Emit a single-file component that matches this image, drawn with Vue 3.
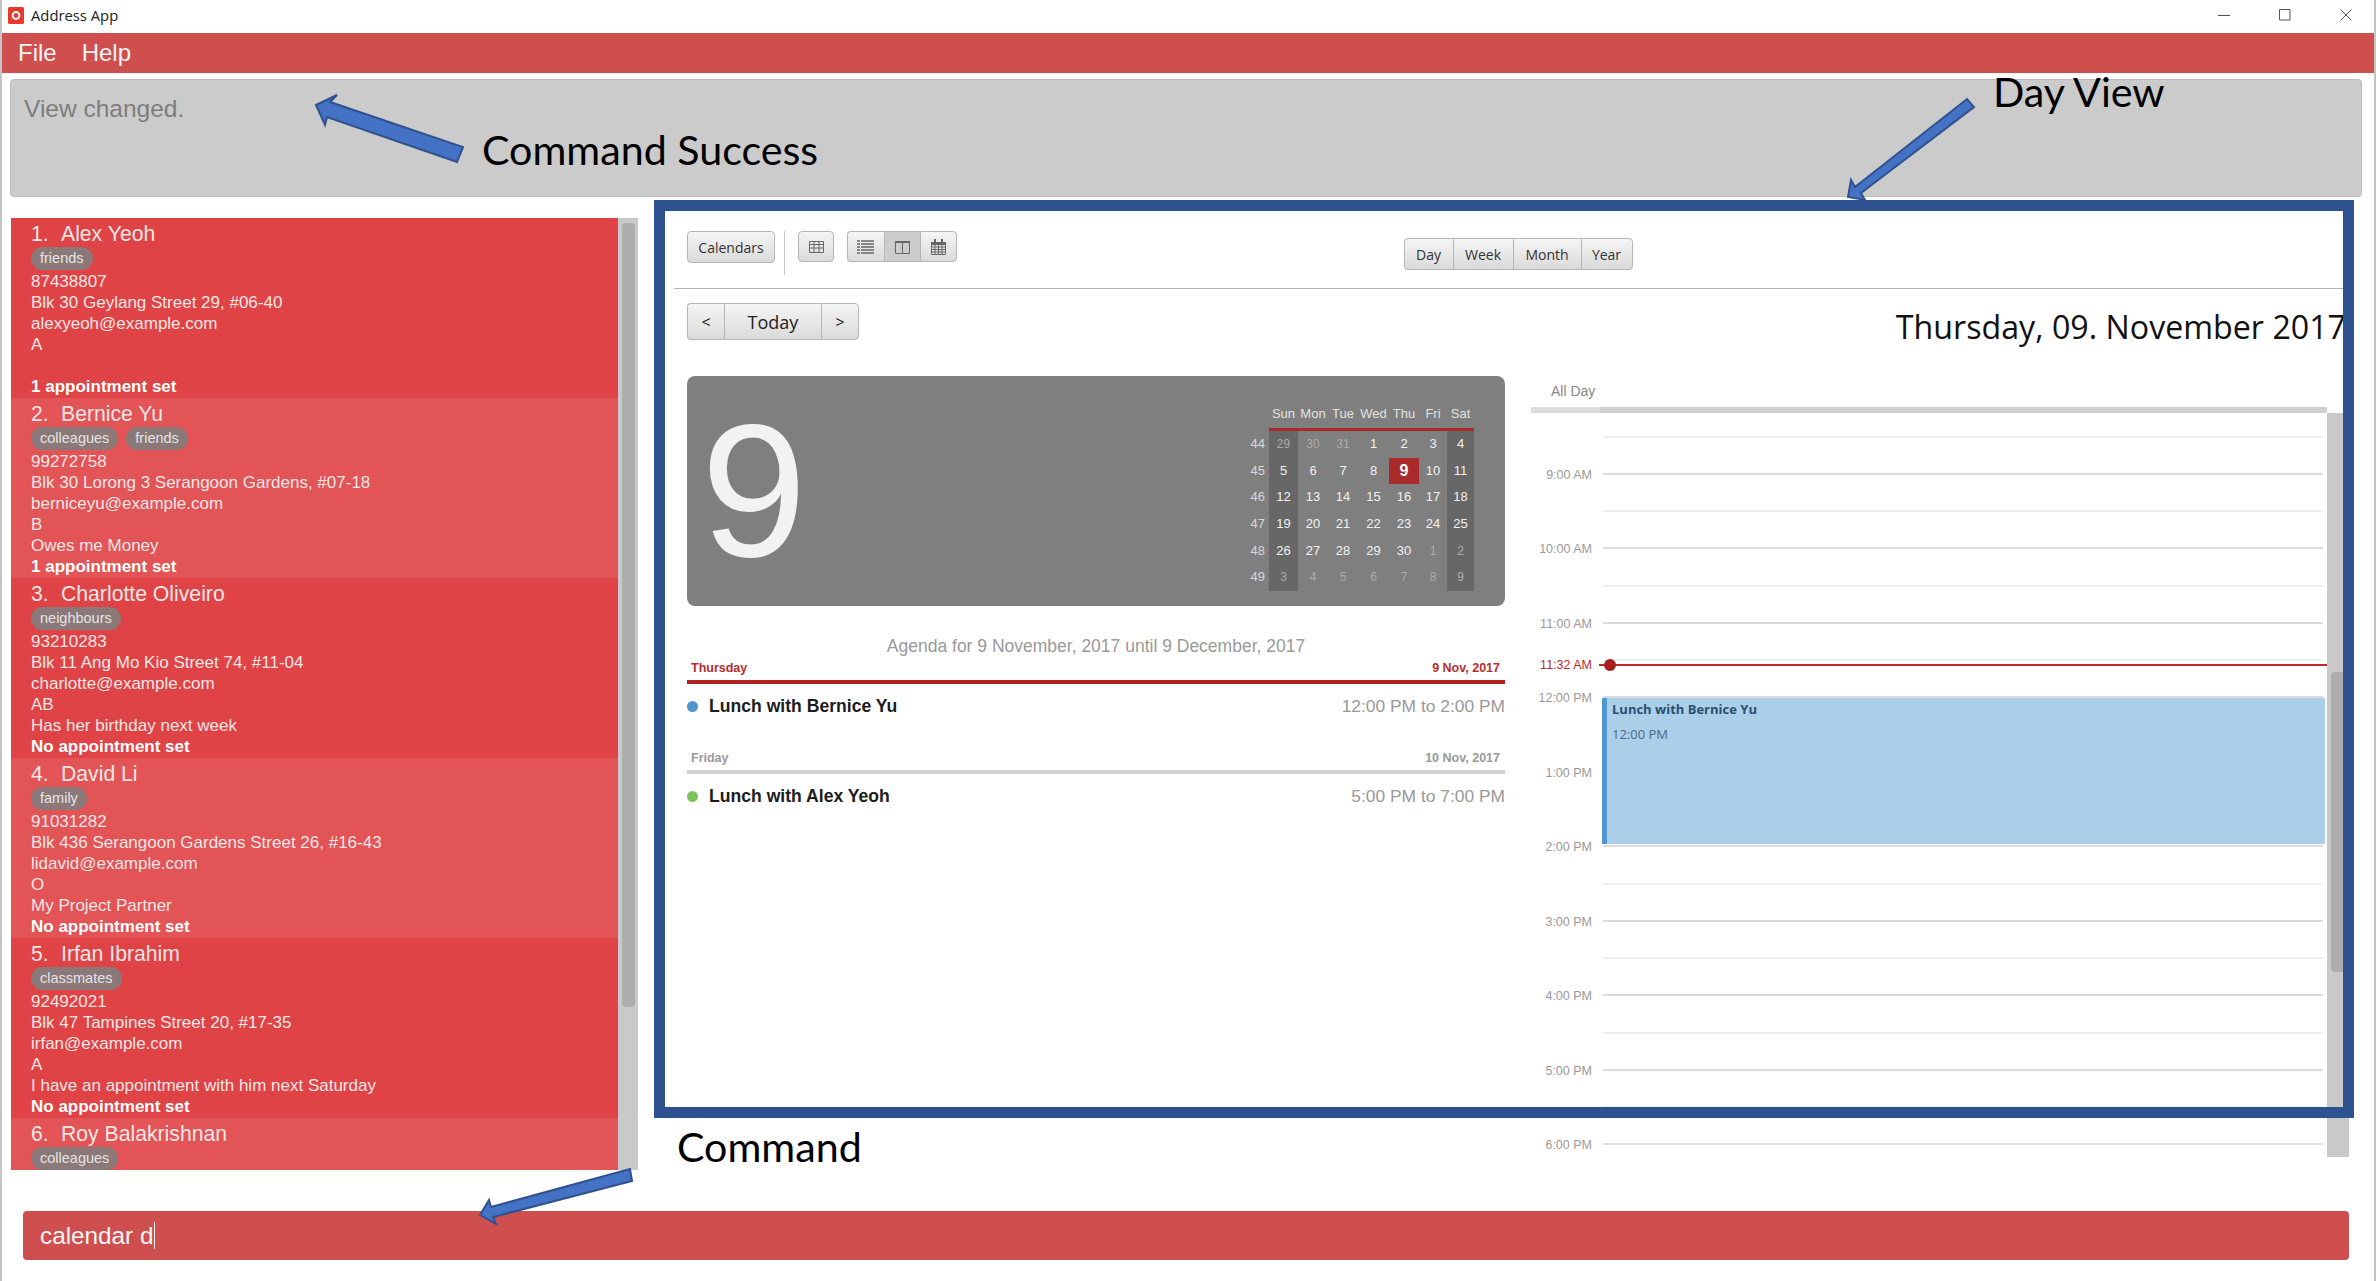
<script setup>
const persons = [
  { name: 'Alex Yeoh', tags: ['friends'], phone: '87438807', address: 'Blk 30 Geylang Street 29, #06-40', email: 'alexyeoh@example.com', group: 'A', remark: '', appt: '1 appointment set' },
  { name: 'Bernice Yu', tags: ['colleagues', 'friends'], phone: '99272758', address: 'Blk 30 Lorong 3 Serangoon Gardens, #07-18', email: 'berniceyu@example.com', group: 'B', remark: 'Owes me Money', appt: '1 appointment set' },
  { name: 'Charlotte Oliveiro', tags: ['neighbours'], phone: '93210283', address: 'Blk 11 Ang Mo Kio Street 74, #11-04', email: 'charlotte@example.com', group: 'AB', remark: 'Has her birthday next week', appt: 'No appointment set' },
  { name: 'David Li', tags: ['family'], phone: '91031282', address: 'Blk 436 Serangoon Gardens Street 26, #16-43', email: 'lidavid@example.com', group: 'O', remark: 'My Project Partner', appt: 'No appointment set' },
  { name: 'Irfan Ibrahim', tags: ['classmates'], phone: '92492021', address: 'Blk 47 Tampines Street 20, #17-35', email: 'irfan@example.com', group: 'A', remark: 'I have an appointment with him next Saturday', appt: 'No appointment set' },
  // the list is scrolled so only the top of this card shows
  { name: 'Roy Balakrishnan', tags: ['colleagues'] },
]

const weekdays = ['Sun', 'Mon', 'Tue', 'Wed', 'Thu', 'Fri', 'Sat']
const weeks = [
  { no: 44, days: [[29, 1], [30, 1], [31, 1], [1], [2], [3], [4]] },
  { no: 45, days: [[5], [6], [7], [8], [9], [10], [11]] },
  { no: 46, days: [[12], [13], [14], [15], [16], [17], [18]] },
  { no: 47, days: [[19], [20], [21], [22], [23], [24], [25]] },
  { no: 48, days: [[26], [27], [28], [29], [30], [1, 1], [2, 1]] },
  { no: 49, days: [[3, 1], [4, 1], [5, 1], [6, 1], [7, 1], [8, 1], [9, 1]] },
]

// one slot every half hour, only the full hours carry a label
const slots = ['', '9:00 AM', '', '10:00 AM', '', '11:00 AM', '', '12:00 PM', '', '1:00 PM', '', '2:00 PM', '', '3:00 PM', '', '4:00 PM', '', '5:00 PM', '', '6:00 PM', '']
</script>

<template>
  <div class="window">
    <div class="title-bar">
      <svg class="app-icon" width="16" height="17" viewBox="0 0 16 17">
        <rect width="16" height="17" rx="1.5" fill="#e8392c" />
        <circle cx="8" cy="8.5" r="3.4" fill="none" stroke="#fff" stroke-width="2" />
      </svg>
      <span class="app-name">Address App</span>
      <div class="win-controls">
        <svg width="12" height="12" viewBox="0 0 12 12"><path d="M0 6.5h12" stroke="#555" fill="none" /></svg>
        <svg width="12" height="12" viewBox="0 0 12 12"><path d="M.5.5h10.5v10.5h-10.5z" stroke="#555" fill="none" /></svg>
        <svg width="12" height="12" viewBox="0 0 12 12"><path d="M.5.5l11 11M11.5.5l-11 11" stroke="#555" fill="none" /></svg>
      </div>
    </div>

    <div class="menu-bar">
      <span>File</span>
      <span>Help</span>
    </div>

    <div class="result-box">View changed.</div>

    <div class="main">
      <div class="person-panel">
        <div class="person-list">
          <div v-for="(p, i) in persons" :key="p.name" class="person" :class="{ even: i % 2 === 1 }">
            <div class="person-name"><span class="person-no">{{ i + 1 }}.</span>{{ p.name }}</div>
            <div class="tags">
              <span v-for="t in p.tags" :key="t" class="tag">{{ t }}</span>
            </div>
            <template v-if="p.appt">
              <div class="line">{{ p.phone }}</div>
              <div class="line">{{ p.address }}</div>
              <div class="line">{{ p.email }}</div>
              <div class="line">{{ p.group }}</div>
              <div class="line">{{ p.remark }}</div>
              <div class="line appt">{{ p.appt }}</div>
            </template>
          </div>
        </div>
        <div class="list-scroll"><div class="list-thumb"></div></div>
      </div>

      <div class="calendar">
        <div class="toolbar">
          <button class="btn calendars-btn">Calendars</button>
          <div class="tool-sep"></div>
          <button class="btn icon-btn">
            <svg width="17" height="14" viewBox="0 0 17 14"><path d="M1.5 1.5h14v11h-14zM1.5 4.5h14M1.5 8h14M6 1.5v11M11 1.5v11" fill="none" stroke="#666" /></svg>
          </button>
          <div class="btn-group view-switch">
            <button class="btn icon-btn">
              <svg width="17" height="15" viewBox="0 0 17 15"><path d="M0 2h3M0 5h3M0 8h3M0 11h3M0 14h3M4 2h13M4 5h13M4 8h13M4 11h13M4 14h13" fill="none" stroke="#666" stroke-width="1.6" /></svg>
            </button>
            <button class="btn icon-btn active">
              <svg width="15" height="14" viewBox="0 0 15 14"><path d="M.5 1.5h14v12h-14zM7.5 1.5v12" fill="none" stroke="#666" /><path d="M0 1h15v2H0z" fill="#666" /></svg>
            </button>
            <button class="btn icon-btn">
              <svg width="15" height="16" viewBox="0 0 15 16"><path d="M.5 3.5h14v12H.5zM.5 8h14M.5 10.5h14M.5 13h14M4 6v9M7.5 6v9M11 6v9" fill="none" stroke="#666" /><path d="M0 3h15v3H0zM3 0h2v4H3zM10 0h2v4h-2z" fill="#666" /></svg>
            </button>
          </div>
          <div class="btn-group range-switch">
            <button class="btn day-btn">Day</button>
            <button class="btn week-btn">Week</button>
            <button class="btn month-btn">Month</button>
            <button class="btn year-btn">Year</button>
          </div>
        </div>

        <div class="nav-row">
          <div class="btn-group nav-group">
            <button class="btn nav-arrow">&lt;</button>
            <button class="btn today-btn">Today</button>
            <button class="btn nav-arrow">&gt;</button>
          </div>
          <div class="date-title">Thursday, 09. November 2017</div>
        </div>

        <div class="cal-body">
          <div class="agenda-col">
            <div class="date-panel">
              <div class="big-day">9</div>
              <div class="mini-cal">
                <div></div>
                <div v-for="d in weekdays" :key="d" class="mini-head">{{ d }}</div>
                <template v-for="w in weeks" :key="w.no">
                  <div class="mini-week">{{ w.no }}</div>
                  <div
                    v-for="(d, j) in w.days"
                    :key="j"
                    class="mini-day"
                    :class="{ weekend: j === 0 || j === 6, muted: d[1], today: w.no === 45 && d[0] === 9 }"
                  >{{ d[0] }}</div>
                </template>
              </div>
            </div>

            <div class="agenda-title">Agenda for 9 November, 2017 until 9 December, 2017</div>

            <div class="agenda-head current">
              <span>Thursday</span>
              <span>9 Nov, 2017</span>
            </div>
            <div class="agenda-row">
              <span class="dot blue"></span>
              <span class="agenda-name">Lunch with Bernice Yu</span>
              <span class="agenda-time">12:00 PM to 2:00 PM</span>
            </div>

            <div class="agenda-head next">
              <span>Friday</span>
              <span>10 Nov, 2017</span>
            </div>
            <div class="agenda-row">
              <span class="dot green"></span>
              <span class="agenda-name">Lunch with Alex Yeoh</span>
              <span class="agenda-time">5:00 PM to 7:00 PM</span>
            </div>
          </div>

          <div class="day-col">
            <div class="all-day">All Day</div>
            <div class="all-day-bar"><div class="all-day-gutter"></div></div>
            <div class="day-scroll">
              <div class="day-grid">
                <div v-for="(s, i) in slots" :key="i" class="slot">
                  <div class="slot-label">{{ s }}</div>
                  <div class="slot-line" :class="{ hour: s }"></div>
                </div>
                <div class="now-label">11:32 AM</div>
                <div class="now-line"><div class="now-dot"></div></div>
                <div class="event">
                  <div class="event-name">Lunch with Bernice Yu</div>
                  <div class="event-time">12:00 PM</div>
                </div>
              </div>
              <div class="day-track"><div class="day-thumb"></div></div>
            </div>
          </div>
        </div>
      </div>
    </div>

    <div class="command-box">calendar d<span class="caret"></span></div>

    <!-- annotations drawn on top of the screenshot -->
    <div class="frame"></div>
    <svg class="arrows" width="2376" height="1281" viewBox="0 0 2376 1281">
      <polygon points="316,105 337,95 330,102 463,147 457,162 327,117 325,125" />
      <polygon points="1848,197 1851,180 1855,187 1967,99 1974,107 1861,193 1865,200" />
      <polygon points="480,1215 489,1200 491,1207 630,1169 632,1181 493,1217 496,1224" />
    </svg>
    <div class="note note-success">Command Success</div>
    <div class="note note-day">Day View</div>
    <div class="note note-command">Command</div>
  </div>
</template>

<style>
html, body {
  margin: 0;
  background: #fff;
}
</style>

<style scoped>
.window {
  position: relative;
  width: 2376px;
  height: 1281px;
  overflow: hidden;
  box-sizing: border-box;
  border-left: 2px solid #c4c4c4;
  border-right: 2px solid #c4c4c4;
  background: #fff;
  display: flex;
  flex-direction: column;
  font-family: "Liberation Sans", sans-serif;
}

.title-bar {
  height: 33px;
  display: flex;
  align-items: center;
  padding-left: 6px;
  padding-bottom: 3px;
  box-sizing: border-box;
}

.app-name {
  margin-left: 7px;
  font-family: "Open Sans", sans-serif;
  font-size: 14.8px;
  color: #222;
}

.win-controls {
  margin-left: auto;
  display: flex;
  gap: 49px;
  padding-right: 22px;
}

.menu-bar {
  height: 40px;
  background: #cf4f4f;
  display: flex;
  align-items: center;
  gap: 25px;
  padding-left: 16px;
  color: #f4f4f4;
  font-size: 24px;
}

.result-box {
  height: 118px;
  box-sizing: border-box;
  margin: 6px 12px 0 8px;
  padding: 14px 13px;
  background: #cbcbcb;
  border: 1px solid #bdbdbd;
  border-radius: 4px;
  color: #7d7d7d;
  font-size: 24.5px;
  line-height: 30px;
}

.main {
  height: 1014px;
  display: flex;
  align-items: flex-start;
}

.person-panel {
  margin: 21px 0 0 9px;
  width: 627px;
  height: 952px;
  display: flex;
}

.person-list {
  flex: 1;
  overflow: hidden;
}

.person {
  height: 180px;
  box-sizing: border-box;
  padding: 3px 0 0 20px;
  background: #e04345;
  color: #f5e6e6;
  font-size: 17px;
}

.person.even {
  background: #e25456;
}

.person-name {
  height: 26px;
  line-height: 26px;
  font-size: 21.2px;
}

.person-no {
  display: inline-block;
  width: 30px;
}

.tags {
  display: flex;
  gap: 8px;
  height: 23px;
  margin-bottom: 1px;
}

.tag {
  padding: 0 9px;
  line-height: 23px;
  border-radius: 12px;
  background: #8b7878;
  color: #e4e4e4;
  font-size: 14.5px;
}

.line {
  height: 21px;
  line-height: 21px;
}

.appt {
  font-weight: 700;
  color: #fff;
}

.list-scroll {
  width: 20px;
  background: #c9c9c9;
  box-sizing: border-box;
  padding: 5px 3px 0 4px;
}

.list-thumb {
  height: 784px;
  border-radius: 4px;
  background: #adadad;
}

.calendar {
  margin: 34px 0 0 36px;
  width: 1675px;
}

.toolbar {
  height: 58px;
  box-sizing: border-box;
  padding-left: 13px;
  border-bottom: 1.5px solid #b4b4b4;
  display: flex;
  align-items: flex-start;
}

.btn {
  margin: 0;
  padding: 0;
  box-sizing: border-box;
  border: 1px solid #b5b5b5;
  border-radius: 4px;
  background: linear-gradient(#f5f5f5, #dadada);
  font-family: "Open Sans", sans-serif;
  font-size: 14px;
  color: #333;
  display: flex;
  align-items: center;
  justify-content: center;
}

.calendars-btn {
  width: 88px;
  height: 32px;
}

.tool-sep {
  width: 1px;
  height: 44px;
  margin: 0 13px 0 9px;
  background: #c4c4c4;
}

.icon-btn {
  width: 36px;
  height: 31px;
}

.btn-group {
  display: flex;
}

.btn-group .btn {
  border-radius: 0;
  border-right-width: 0;
}

.btn-group .btn:first-child {
  border-radius: 4px 0 0 4px;
}

.btn-group .btn:last-child {
  border-radius: 0 4px 4px 0;
  border-right-width: 1px;
}

.view-switch {
  margin-left: 13px;
}

.view-switch .icon-btn {
  width: 36.5px;
}

.btn.active {
  background: #cdcdcd;
}

.range-switch {
  margin: 7px 0 0 447px;
}

.range-switch .btn {
  height: 32px;
}

.day-btn { width: 49px; }
.week-btn { width: 60px; }
.month-btn { width: 68px; }
.year-btn { width: 52px; }

.nav-row {
  margin-top: 14px;
  padding: 0 3px 0 13px;
  height: 37px;
  display: flex;
  justify-content: space-between;
  align-items: center;
}

.nav-arrow {
  width: 37px;
  height: 37px;
  font-size: 16px;
  color: #222;
}

.nav-arrow:last-child {
  width: 38px;
}

.today-btn {
  width: 97px;
  height: 37px;
  font-size: 18px;
  color: #222;
}

.date-title {
  margin-top: 10px;
  font-family: "Open Sans", sans-serif;
  font-size: 32.2px;
  color: #111;
  white-space: nowrap;
}

.cal-body {
  margin-top: 36px;
  display: flex;
  align-items: flex-start;
}

.agenda-col {
  margin-left: 13px;
  width: 818px;
}

.date-panel {
  height: 230px;
  box-sizing: border-box;
  padding: 25px 31px 0 0;
  border-radius: 8px;
  background: #7f7f7f;
  display: flex;
  justify-content: space-between;
  overflow: hidden;
}

.big-day {
  margin: 0 0 0 14px;
  font-family: "Liberation Sans", sans-serif;
  font-size: 190px;
  line-height: 178px;
  color: #f2f2f2;
}

.mini-cal {
  display: grid;
  grid-template-columns: 30px 29px 30px 30px 31px 30px 28px 27px;
  grid-template-rows: 30px repeat(6, 26.7px);
  font-size: 13px;
  color: #f2f2f2;
}

.mini-head {
  height: 30px;
  box-sizing: border-box;
  border-bottom: 3px solid #a82a2a;
  color: #e2e2e2;
  text-align: center;
  line-height: 26px;
}

.mini-week {
  padding-right: 4px;
  text-align: right;
  color: #d8d8d8;
  line-height: 26.7px;
}

.mini-day {
  text-align: center;
  line-height: 26.7px;
}

.mini-day.weekend {
  background: #676767;
}

.mini-day.muted {
  color: #adadad;
  font-size: 12px;
}

.mini-day.today {
  background: #a82a2a;
  color: #fff;
  font-weight: 700;
  font-size: 16px;
}

.agenda-title {
  margin-top: 29px;
  height: 22px;
  line-height: 22px;
  text-align: center;
  font-size: 17.5px;
  color: #999;
}

.agenda-head {
  height: 27px;
  box-sizing: border-box;
  padding: 0 5px 0 4px;
  display: flex;
  justify-content: space-between;
  font-size: 12.5px;
  font-weight: 700;
  line-height: 22px;
}

.agenda-head.current {
  border-bottom: 4px solid #b22222;
  color: #b92c2c;
}

.agenda-head.next {
  margin-top: 19px;
  border-bottom: 4px solid #d2d2d2;
  color: #999;
}

.agenda-row {
  height: 44px;
  display: flex;
  align-items: center;
}

.dot {
  width: 11px;
  height: 11px;
  border-radius: 50%;
  margin-right: 11px;
}

.dot.blue { background: #4f96d1; }
.dot.green { background: #7cc35b; }

.agenda-name {
  font-size: 17.6px;
  font-weight: 700;
  color: #1c1c1c;
}

.agenda-time {
  margin-left: auto;
  font-size: 17.4px;
  color: #999;
}

.day-col {
  margin-left: 26px;
  width: 818px;
}

.all-day {
  height: 31px;
  box-sizing: border-box;
  padding-left: 20px;
  font-size: 14px;
  line-height: 30px;
  color: #888;
}

.all-day-bar {
  width: 796px;
  height: 6px;
  background: #cfcfcf;
}

.all-day-gutter {
  width: 69px;
  height: 6px;
  background: #dcdcdc;
}

.day-scroll {
  height: 744px;
  display: flex;
}

.day-grid {
  position: relative;
  width: 796px;
  height: 744px;
  overflow: hidden;
  box-sizing: border-box;
  padding-top: 5px;
}

.slot {
  height: 37.25px;
  display: flex;
  align-items: center;
}

.slot-label {
  width: 61px;
  flex: none;
  margin-right: 11px;
  padding-top: 2px;
  text-align: right;
  font-size: 12.5px;
  color: #999;
}

.slot-line {
  flex: 1;
  height: 2px;
  margin-right: 4px;
  background: #eeeeee;
}

.slot-line.hour {
  background: #dcdcdc;
}

.now-label {
  position: absolute;
  top: 244px;
  left: 0;
  width: 61px;
  text-align: right;
  font-size: 12.5px;
  line-height: 16px;
  color: #b92c2c;
}

.now-line {
  position: absolute;
  top: 251px;
  left: 68px;
  right: 0;
  height: 2px;
  background: #bb2b2b;
}

.now-dot {
  position: absolute;
  top: -5px;
  left: 5px;
  width: 12px;
  height: 12px;
  border-radius: 50%;
  background: #a81f1f;
}

.event {
  position: absolute;
  top: 285px;
  left: 71px;
  width: 723px;
  height: 146px;
  box-sizing: border-box;
  padding-left: 5px;
  border-left: 5px solid #4f96d1;
  background: #abcee9;
}

.event-name {
  margin-top: 3px;
  height: 16px;
  line-height: 16px;
  font-family: "Open Sans", sans-serif;
  font-weight: 700;
  font-size: 13px;
  color: #2a4f70;
}

.event-time {
  margin-top: 9px;
  line-height: 16px;
  font-family: "Open Sans", sans-serif;
  font-size: 13px;
  color: #4b6a85;
}

.day-track {
  width: 22px;
  height: 744px;
  box-sizing: border-box;
  padding: 259px 3px 0 4px;
  background: #c9c9c9;
}

.day-thumb {
  height: 300px;
  border-radius: 4px;
  background: #adadad;
}

.command-box {
  width: 2326px;
  height: 49px;
  margin-left: 21px;
  box-sizing: border-box;
  padding-left: 17px;
  border-radius: 4px;
  background: #cf4f4f;
  color: #f6f6f6;
  font-size: 24.3px;
  line-height: 49px;
  display: flex;
}

.caret {
  width: 1px;
  height: 27px;
  margin: 11px 0 0 1px;
  background: #f6f6f6;
}

.frame {
  position: absolute;
  left: 652px;
  top: 200px;
  width: 1700px;
  height: 918px;
  box-sizing: border-box;
  border: 11px solid #2e528f;
}

.arrows {
  position: absolute;
  left: -2px;
  top: 0;
}

.arrows polygon {
  fill: #4472c4;
  stroke: #2f528f;
  stroke-width: 2;
}

.note {
  position: absolute;
  font-family: Lato, sans-serif;
  font-size: 41.2px;
  line-height: 48px;
  color: #000;
  white-space: nowrap;
}

.note-success {
  left: 480px;
  top: 125px;
}

.note-day {
  left: 1991px;
  top: 67px;
}

.note-command {
  left: 675px;
  top: 1122px;
}
</style>
